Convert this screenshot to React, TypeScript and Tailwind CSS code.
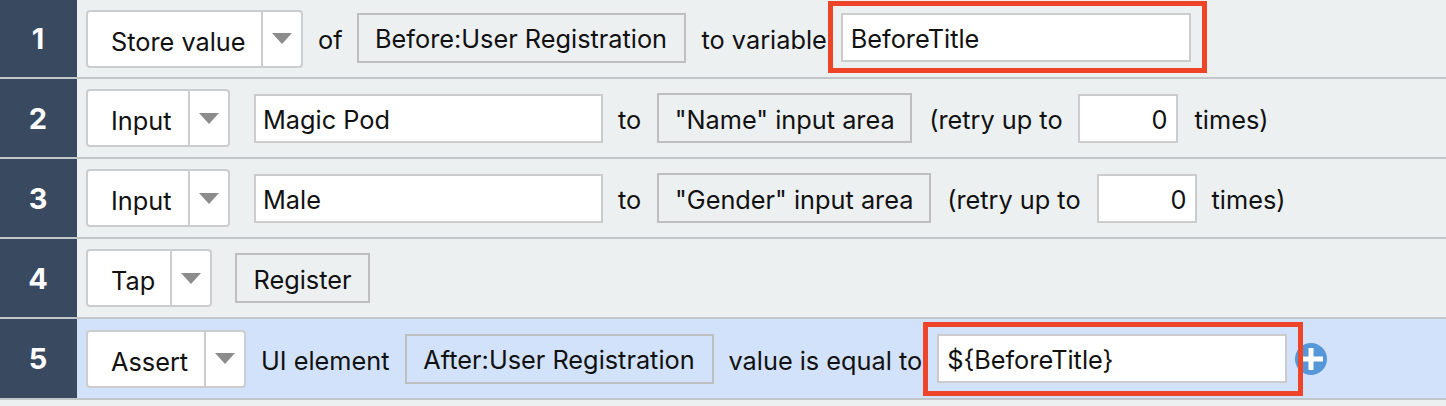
import type { ReactNode } from "react";

function Select({ label, width }: { label: string; width: string }) {
  return (
    <div className={`flex h-[58px] shrink-0 items-center rounded-[4px] border-2 border-[#cbcdce] bg-white ${width}`}>
      <div className="flex-1 pl-[23px] pt-[6px]">{label}</div>
      <div className="flex h-full w-[40px] shrink-0 items-center justify-center border-l-2 border-[#cbcdce]">
        <div className="h-0 w-0 border-x-[10px] border-t-[11px] border-x-transparent border-t-[#8c8c8c]" />
      </div>
    </div>
  );
}

function Chip({ children, className = "" }: { children: ReactNode; className?: string }) {
  return (
    <div className={`flex h-[50px] shrink-0 items-center justify-center border-2 border-[#bdbfc0] pt-[3px] ${className}`}>
      {children}
    </div>
  );
}

function Field({ children, className = "" }: { children: ReactNode; className?: string }) {
  return (
    <div className={`flex h-[49px] shrink-0 items-center border-2 border-[#cccccc] bg-white pt-[3px] ${className}`}>
      {children}
    </div>
  );
}

function Label({ children, className = "" }: { children: ReactNode; className?: string }) {
  return <span className={`shrink-0 pt-[4px] ${className}`}>{children}</span>;
}

function Highlight({ className = "" }: { className?: string }) {
  return <div className={`pointer-events-none absolute border-[5px] border-[#ee4528] ${className}`} />;
}

function Row({
  n,
  height,
  active,
  children,
}: {
  n: number;
  height: string;
  active?: boolean;
  children: ReactNode;
}) {
  return (
    <div className={`flex border-b-2 border-[#c3c6c8] ${height} ${active ? "bg-[#d2e2fa]" : ""}`}>
      <div className="flex w-[77px] shrink-0 items-center justify-center bg-[#39495f] pr-[1px] text-[29px] font-bold text-white">
        {n}
      </div>
      <div className="flex flex-1 items-center pl-[9px]">{children}</div>
    </div>
  );
}

export default function App() {
  return (
    <div className="h-[406px] w-[1446px] overflow-hidden bg-[#ecf0f1] font-['Inter','Liberation_Sans',sans-serif] text-[25.3px] leading-none text-[#111111]">
      <Row n={1} height="h-[79px]">
        <Select label="Store value" width="w-[217px]" />
        <Label className="mb-[2px] ml-[15px]">of</Label>
        <Chip className="mb-[2px] ml-[14px] w-[329px]">Before:User Registration</Chip>
        <Label className="mb-[2px] ml-[16px]">to variable</Label>
        <div className="relative mb-[2px] ml-[14px]">
          <Field className="w-[350px] pl-[8px]">BeforeTitle</Field>
          <Highlight className="-bottom-[11px] -left-[13px] -right-[16px] -top-[12px]" />
        </div>
      </Row>
      <Row n={2} height="h-[80px]">
        <Select label="Input" width="w-[144px]" />
        <Field className="ml-[24px] w-[349px] pl-[7px]">Magic Pod</Field>
        <Label className="ml-[15px]">to</Label>
        <Chip className="ml-[16px] w-[255px]">"Name" input area</Chip>
        <Label className="ml-[17px]">(retry up to</Label>
        <Field className="ml-[15px] w-[100px] justify-end pr-[8px]">0</Field>
        <Label className="ml-[17px]">times)</Label>
      </Row>
      <Row n={3} height="h-[80px]">
        <Select label="Input" width="w-[144px]" />
        <Field className="ml-[24px] w-[349px] pl-[7px]">Male</Field>
        <Label className="ml-[15px]">to</Label>
        <Chip className="ml-[16px] w-[274px]">"Gender" input area</Chip>
        <Label className="ml-[16px]">(retry up to</Label>
        <Field className="ml-[16px] w-[100px] justify-end pr-[8px]">0</Field>
        <Label className="ml-[15px]">times)</Label>
      </Row>
      <Row n={4} height="h-[80px]">
        <Select label="Tap" width="w-[126px]" />
        <Chip className="ml-[23px] w-[135px]">Register</Chip>
      </Row>
      <Row n={5} height="h-[81px]" active>
        <Select label="Assert" width="w-[160px]" />
        <Label className="ml-[15px]">UI element</Label>
        <Chip className="ml-[15px] w-[309px]">After:User Registration</Chip>
        <Label className="ml-[15px]">value is equal to</Label>
        <div className="relative ml-[15px]">
          <Field className="w-[350px] pl-[8px]">{"${BeforeTitle}"}</Field>
          <Highlight className="-bottom-[13px] -left-[14px] -right-[16px] -top-[12px]" />
        </div>
        <svg viewBox="0 0 32 32" className="ml-[8px] h-[32px] w-[32px] shrink-0">
          <circle cx="16" cy="16" r="16" fill="#5597d8" />
          <path d="M16 5v22M6 16h22" stroke="#fff" strokeWidth="5" />
        </svg>
      </Row>
    </div>
  );
}
